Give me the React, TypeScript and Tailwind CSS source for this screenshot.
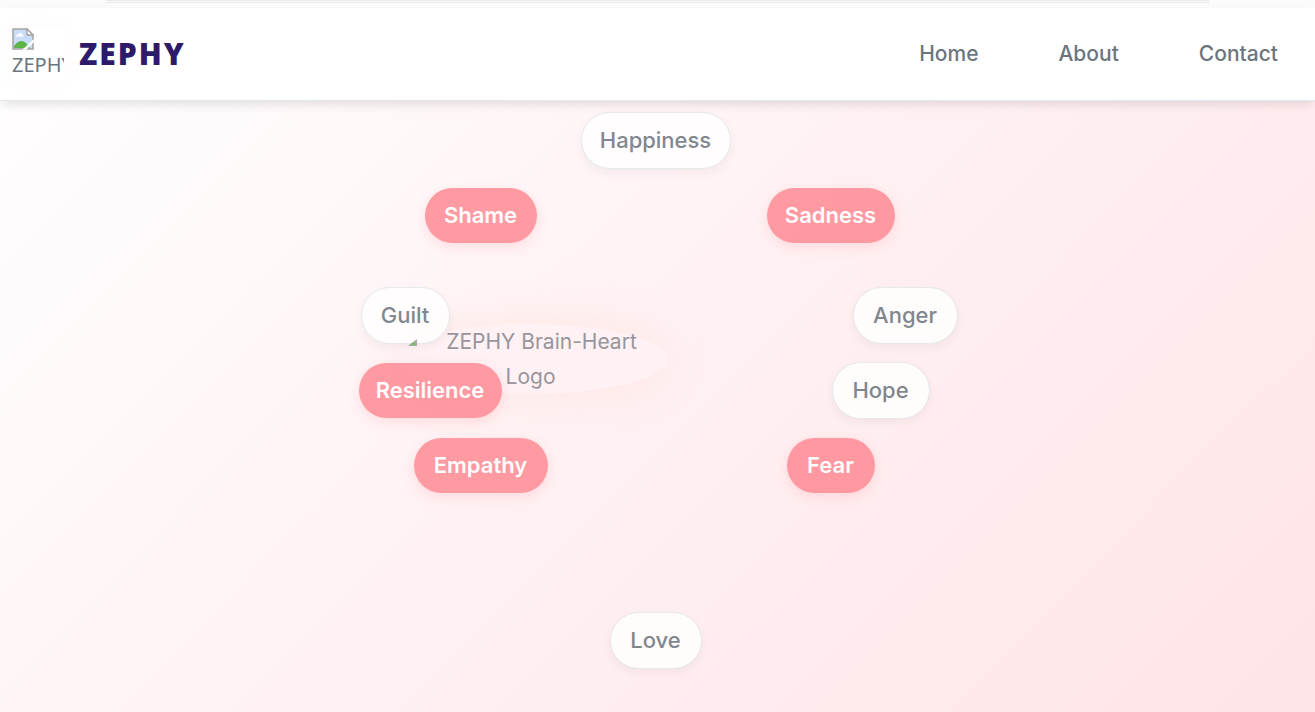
type Tone = "light" | "rose";

interface Emotion {
  label: string;
  tone: Tone;
  place: string;
}

const emotions: Emotion[] = [
  { label: "Happiness", tone: "light", place: "left-[222px] top-[12px] w-[150px]" },
  { label: "Sadness", tone: "rose", place: "left-[408px] top-[87px] w-[128px]" },
  { label: "Anger", tone: "light", place: "left-[494px] top-[187px] w-[105px]" },
  { label: "Hope", tone: "light", place: "left-[473px] top-[262px] w-[98px]" },
  { label: "Fear", tone: "rose", place: "left-[428px] top-[337px] w-[88px]" },
  { label: "Love", tone: "light", place: "left-[251px] top-[512px] w-[92px]" },
  { label: "Empathy", tone: "rose", place: "left-[55px] top-[337px] w-[134px]" },
  { label: "Resilience", tone: "rose", place: "left-0 top-[262px] w-[143px]" },
  { label: "Guilt", tone: "light", place: "left-[2px] top-[187px] w-[89px]" },
  { label: "Shame", tone: "rose", place: "left-[66px] top-[87px] w-[112px]" },
];

const tones: Record<Tone, string> = {
  light:
    "h-[57px] border border-[#e3e8ec] bg-white font-medium text-[#6c757d] shadow-[0_4px_10px_rgba(0,0,0,0.05)]",
  rose: "mt-px h-[55px] bg-[#ff8a94] font-semibold text-white shadow-[0_4px_12px_rgba(255,138,148,0.25)]",
};

function MissingPicture({ className }: { className: string }) {
  return (
    <svg viewBox="0 0 22 22" className={className} aria-hidden="true">
      <path d="M1 1H15L21 7V21H1Z" fill="#c9dcf8" stroke="#a3a3a3" strokeWidth="1.5" />
      <path d="M4 8.5a2 2 0 0 1 2-2a2.5 2.5 0 0 1 4.5 0a2 2 0 0 1 1 2Z" fill="#fff" />
      <path d="M2 20V18Q8 10 14 15L18 20Z" fill="#5bb548" />
      <path d="M10 22L22 11V14L14 22Z" fill="#fff" />
      <path d="M15 1V7H21Z" fill="#fff" stroke="#a3a3a3" strokeWidth="1.3" />
    </svg>
  );
}

function PictureCorner({ className }: { className: string }) {
  return (
    <svg viewBox="0 0 10 8" className={className} aria-hidden="true">
      <path d="M0 8L9 1V8Z" fill="#8f9d94" />
      <path d="M1.5 7L6 3.5L8 7Z" fill="#63b04f" />
    </svg>
  );
}

export default function App() {
  return (
    <div className="flex min-h-screen flex-col overflow-x-hidden bg-[linear-gradient(135deg,#ffffff_0%,#fff1f3_50%,#ffe4e7_100%)] font-['Inter',sans-serif]">
      <div className="h-2 bg-[#fbfbfb] px-[106px]">
        <div className="h-[3px] border-y border-[#ebebeb] bg-[#f8f8f8]" />
      </div>
      <header className="relative z-10 flex h-[93px] items-center justify-between border-b border-[#e3e8ee] bg-white pr-[37px] pl-3 shadow-[0_5px_10px_-2px_rgba(0,0,0,0.12)]">
        <a href="#home" className="flex items-center gap-[15px]">
          <span className="block h-[52px] w-[52px] overflow-hidden text-xl leading-[30px] text-[#6c757d] shadow-[0_0_16px_rgba(255,190,160,0.08)] font-['Noto_Sans',sans-serif]">
            <MissingPicture className="block h-[22px] w-[22px]" />
            ZEPHY
          </span>
          <span className="text-[30px] leading-10 font-extrabold tracking-[2px] text-[#2d1b69] font-['Open_Sans',sans-serif]">
            ZEPHY
          </span>
        </a>
        <nav className="flex gap-20 text-[21px] font-medium text-[#6c757d]">
          <a href="#home">Home</a>
          <a href="#about">About</a>
          <a href="#contact">Contact</a>
        </nav>
      </header>
      <main className="flex grow justify-center">
        <div className="relative -mt-px h-[612px] w-[598px] shrink-0">
          <div className="absolute top-[224px] left-[35px] h-[70px] w-[274px] rounded-[50%] bg-[#fff1f4] shadow-[0_0_50px_rgba(255,160,140,0.15)]">
            <p className="text-center text-[21px] leading-[35px] text-[#98959a]">
              <span className="block pl-[22px] whitespace-nowrap">ZEPHY Brain-Heart</span>
              Logo
            </p>
          </div>
          {emotions.map(({ label, tone, place }) => (
            <button
              key={label}
              type="button"
              className={`absolute flex items-center justify-center rounded-full text-[22px] opacity-85 ${tones[tone]} ${place}`}
            >
              {label}
            </button>
          ))}
          <PictureCorner className="absolute top-[238px] left-[49px] h-2 w-2.5 opacity-80" />
        </div>
      </main>
    </div>
  );
}
